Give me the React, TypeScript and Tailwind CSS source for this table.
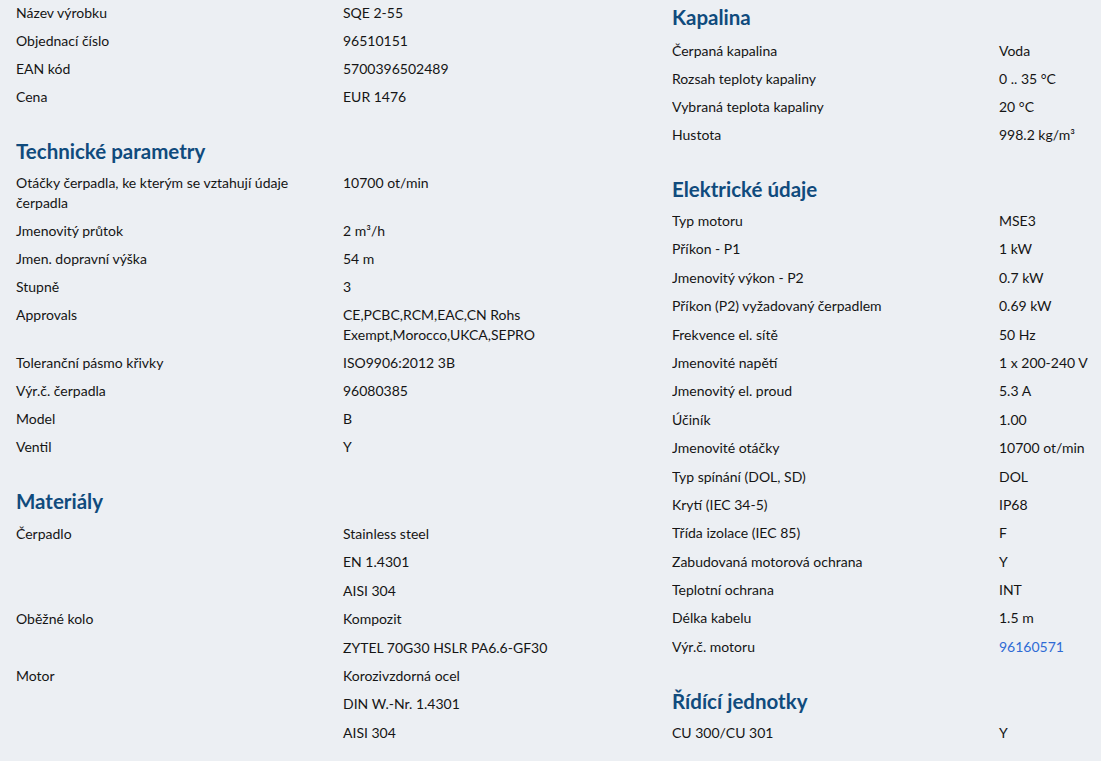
type Row = { label?: string; value: string; link?: boolean };

const produkt: Row[] = [
  { label: "Název výrobku", value: "SQE 2-55" },
  { label: "Objednací číslo", value: "96510151" },
  { label: "EAN kód", value: "5700396502489" },
  { label: "Cena", value: "EUR 1476" },
];

const technicke: Row[] = [
  { label: "Otáčky čerpadla, ke kterým se vztahují údaje čerpadla", value: "10700 ot/min" },
  { label: "Jmenovitý průtok", value: "2 m³/h" },
  { label: "Jmen. dopravní výška", value: "54 m" },
  { label: "Stupně", value: "3" },
  { label: "Approvals", value: "CE,PCBC,RCM,EAC,CN Rohs Exempt,Morocco,UKCA,SEPRO" },
  { label: "Toleranční pásmo křivky", value: "ISO9906:2012 3B" },
  { label: "Výr.č. čerpadla", value: "96080385" },
  { label: "Model", value: "B" },
  { label: "Ventil", value: "Y" },
];

const materialy: Row[] = [
  { label: "Čerpadlo", value: "Stainless steel" },
  { value: "EN 1.4301" },
  { value: "AISI 304" },
  { label: "Oběžné kolo", value: "Kompozit" },
  { value: "ZYTEL 70G30 HSLR PA6.6-GF30" },
  { label: "Motor", value: "Korozivzdorná ocel" },
  { value: "DIN W.-Nr. 1.4301" },
  { value: "AISI 304" },
];

const kapalina: Row[] = [
  { label: "Čerpaná kapalina", value: "Voda" },
  { label: "Rozsah teploty kapaliny", value: "0 .. 35 °C" },
  { label: "Vybraná teplota kapaliny", value: "20 °C" },
  { label: "Hustota", value: "998.2 kg/m³" },
];

const elektricke: Row[] = [
  { label: "Typ motoru", value: "MSE3" },
  { label: "Příkon - P1", value: "1 kW" },
  { label: "Jmenovitý výkon - P2", value: "0.7 kW" },
  { label: "Příkon (P2) vyžadovaný čerpadlem", value: "0.69 kW" },
  { label: "Frekvence el. sítě", value: "50 Hz" },
  { label: "Jmenovité napětí", value: "1 x 200-240 V" },
  { label: "Jmenovitý el. proud", value: "5.3 A" },
  { label: "Účiník", value: "1.00" },
  { label: "Jmenovité otáčky", value: "10700 ot/min" },
  { label: "Typ spínání (DOL, SD)", value: "DOL" },
  { label: "Krytí (IEC 34-5)", value: "IP68" },
  { label: "Třída izolace (IEC 85)", value: "F" },
  { label: "Zabudovaná motorová ochrana", value: "Y" },
  { label: "Teplotní ochrana", value: "INT" },
  { label: "Délka kabelu", value: "1.5 m" },
  { label: "Výr.č. motoru", value: "96160571", link: true },
];

const ridici: Row[] = [{ label: "CU 300/CU 301", value: "Y" }];

// spacing classes per heading, tuned to the page rhythm
function Heading({ children, className }: { children: React.ReactNode; className: string }) {
  return (
    <h2 className={`${className} h-7 text-[20.5px] leading-7 font-bold text-[#104b7d]`}>
      {children}
    </h2>
  );
}

function Rows({ rows, loose }: { rows: Row[]; loose?: boolean }) {
  return (
    <div>
      {rows.map((r, i) => (
        <div key={i} className={`flex pt-[3px] leading-5 ${loose ? "pb-[5.4px]" : "pb-[5px]"}`}>
          <div className="w-[327px] shrink-0 pr-8">{r.label}</div>
          <div className={`w-[290px] shrink-0 pr-2 ${r.link ? "text-[#2f6bd5]" : ""}`}>{r.value}</div>
        </div>
      ))}
    </div>
  );
}

export default function App() {
  return (
    <div
      className="w-[1101px] h-[761px] overflow-hidden bg-[#eceff3] text-[14px] text-[#151515]"
      style={{ fontFamily: "Lato, 'Noto Sans', sans-serif" }}
    >
      <div className="grid grid-cols-[656px_1fr] pl-4">
        <div>
          <Rows rows={produkt} />
          <Heading className="mt-[25px] mb-[5px]">Technické parametry</Heading>
          <Rows rows={technicke} />
          <Heading className="mt-[25px] mb-[6px]">Materiály</Heading>
          <Rows rows={materialy} loose />
        </div>
        <div className="pt-[3px] overflow-hidden whitespace-nowrap">
          <Heading className="mb-[7px]">Kapalina</Heading>
          <Rows rows={kapalina} />
          <Heading className="mt-[25px] mb-[5px]">Elektrické údaje</Heading>
          <Rows rows={elektricke} loose />
          <Heading className="mt-[25px] mb-[5px]">Řídící jednotky</Heading>
          <Rows rows={ridici} />
        </div>
      </div>
    </div>
  );
}
